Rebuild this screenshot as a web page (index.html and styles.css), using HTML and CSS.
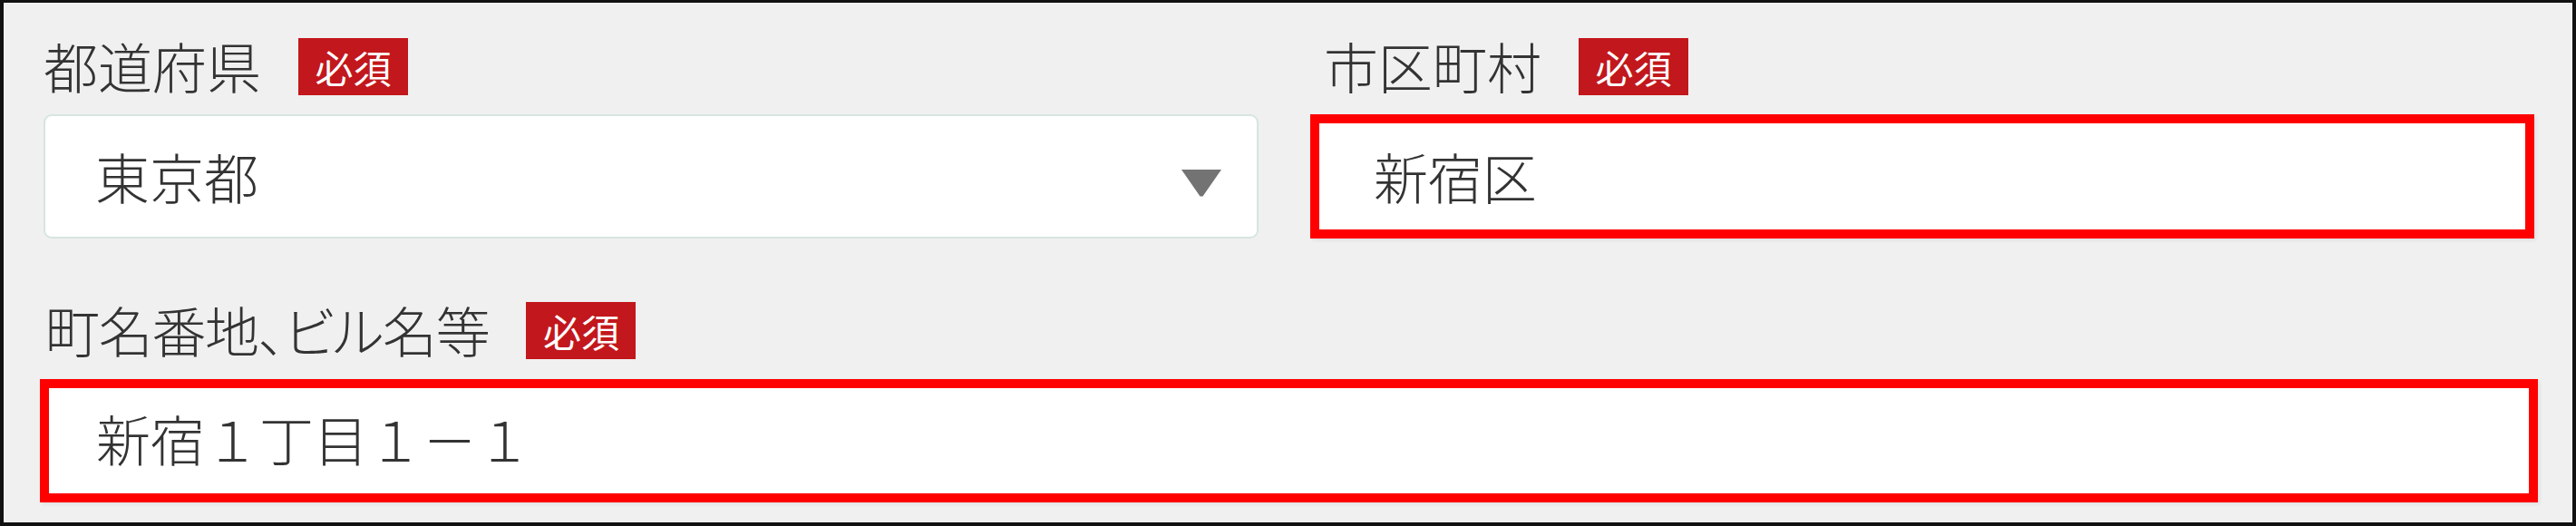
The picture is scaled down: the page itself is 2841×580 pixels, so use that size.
FILE: index.html
```html
<!DOCTYPE html>
<html lang="ja">
<head>
<meta charset="utf-8">
<title>住所入力</title>
<link rel="stylesheet" href="styles.css">
</head>
<body>
<div class="panel">
  <div class="row">
    <div class="field field-pref">
      <div class="label"><span class="label-text">都道府県</span><span class="req">必須</span></div>
      <div class="select">
        <span class="value">東京都</span>
        <svg class="caret" width="44" height="30" viewBox="0 0 44 30"><path d="M0 0H44L23.5 29.5H20.5Z"/></svg>
      </div>
    </div>
    <div class="field field-city">
      <div class="label label-indent"><span class="label-text">市区町村</span><span class="req">必須</span></div>
      <div class="input highlight"><span class="value value-city">新宿区</span></div>
    </div>
  </div>
  <div class="field field-addr">
    <div class="label label-addr"><span class="label-text label-tight">町名番地、ビル名等</span><span class="req">必須</span></div>
    <div class="input highlight wide"><span class="value value-addr">新宿１丁目１－１</span></div>
  </div>
</div>
</body>
</html>
```
FILE: styles.css
```css
* { box-sizing: border-box; }
html, body { margin: 0; padding: 0; background: #f0f0f0; }
body {
  font-family: "Noto Sans CJK JP", "Noto Sans", sans-serif;
  font-weight: 300;
  color: #333;
}
.panel {
  width: 2841px;
  height: 580px;
  border-style: solid;
  border-color: #111;
  border-width: 3px 4px 4px 4px;
  background: #f0f0f0;
  padding: 39px 42px 22px 44px;
  display: flex;
  flex-direction: column;
}
.row {
  display: flex;
  gap: 57px;
}
.field-pref { width: 1340px; }
.field-city { width: 1350px; }
.label {
  display: flex;
  align-items: center;
  height: 63px;
  font-size: 60px;
  line-height: 63px;
  font-feature-settings: "palt";
}
.label-indent { padding-left: 15px; }
.label-text { position: relative; top: -2px; }
.label-tight { letter-spacing: -1.3px; }
.req {
  margin-left: 41px;
  width: 121px;
  height: 63px;
  background: #c2171c;
  color: #fff;
  font-size: 42px;
  font-weight: 400;
  line-height: 63px;
  text-align: center;
  font-feature-settings: normal;
}
.select {
  margin-top: 21px;
  height: 137px;
  background: #fff;
  border: 2px solid #d6e5df;
  border-radius: 9px;
  display: flex;
  align-items: center;
  justify-content: space-between;
  padding: 0 39px 0 55px;
}
.caret { fill: #737373; margin-top: 15px; }
.value {
  font-size: 60px;
  line-height: 70px;
  position: relative;
  top: -1px;
}
.input {
  margin-top: 21px;
  height: 137px;
  background: #fff;
  display: flex;
  align-items: center;
}
.highlight {
  border: 10px solid #ff0000;
  box-shadow: 2px 2px 4px rgba(0, 0, 0, 0.07);
}
.value-city { padding-left: 60px; }
.field-addr { margin-top: 70px; }
.label-addr { padding-left: 2px; }
.wide {
  margin: 22px -4px 0 -4px;
  height: 136px;
}
.value-addr { padding-left: 52px; top: -3px; }
```
